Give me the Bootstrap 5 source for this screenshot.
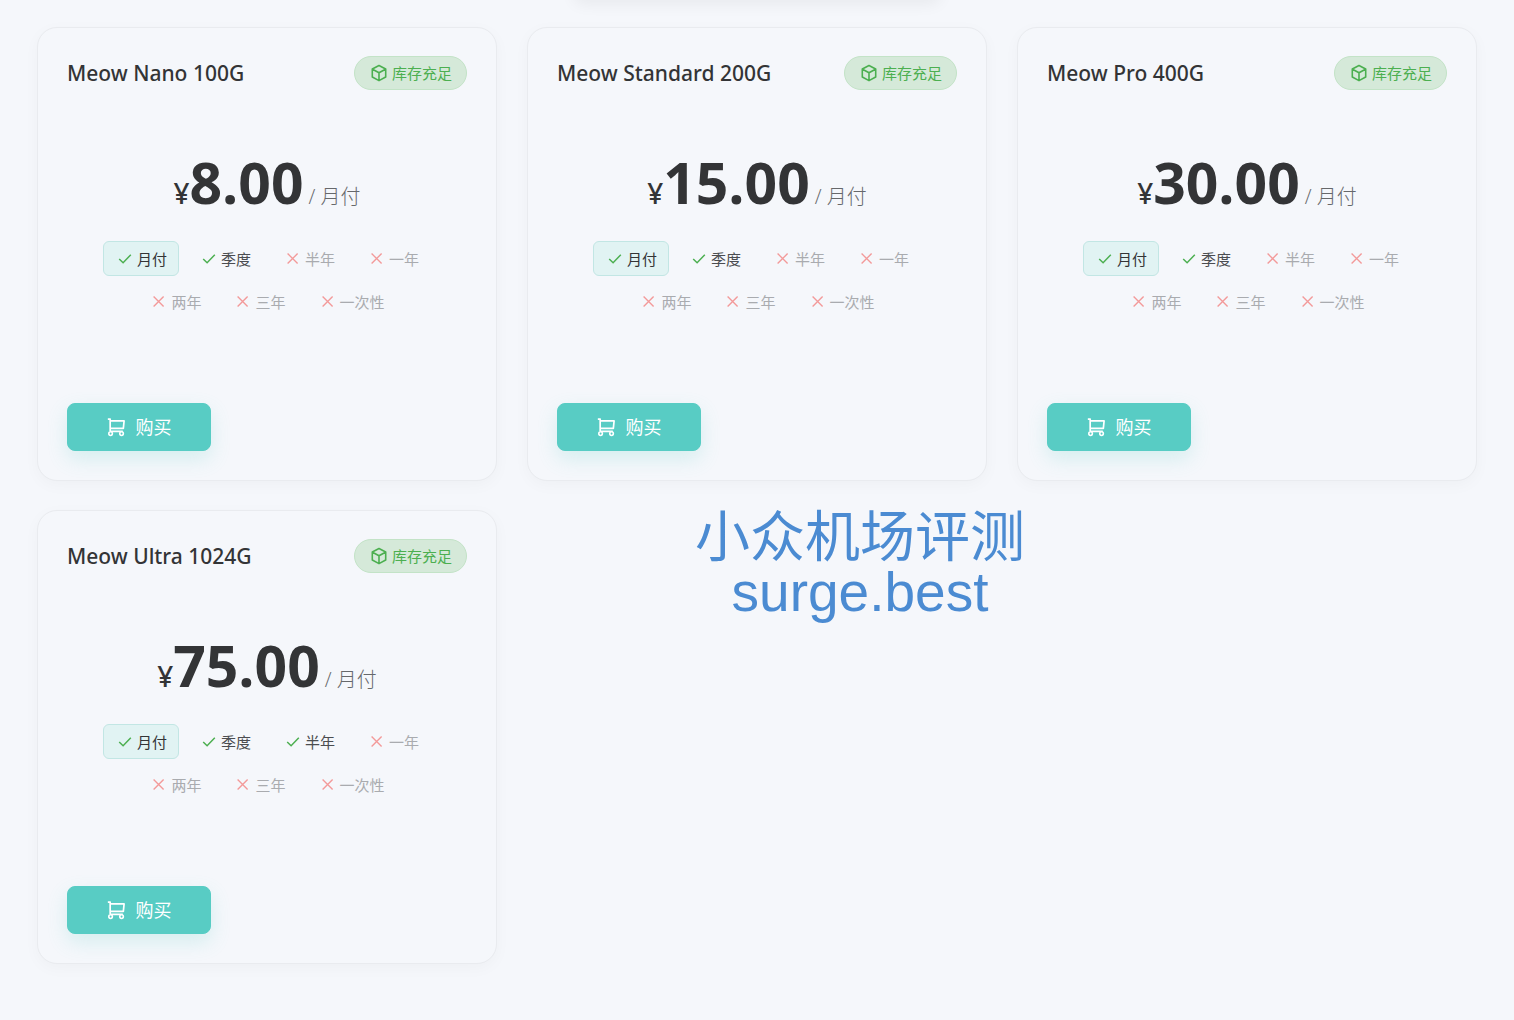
<!DOCTYPE html>
<html lang="zh-CN">
<head>
<meta charset="utf-8">
<meta name="viewport" content="width=device-width, initial-scale=1">
<title>Meow 套餐</title>
<link href="https://cdn.jsdelivr.net/npm/bootstrap@5.3.0/dist/css/bootstrap.min.css" rel="stylesheet">
<style>
body{background:#f5f7fb;color:#333436;font-family:"Open Sans","Noto Sans CJK SC",sans-serif}
svg{fill:none;stroke:currentColor;flex:none}
.top-strip{height:27px;overflow:hidden}
.top-shade{width:368px;height:20px;margin-top:-20px;border-radius:12px;box-shadow:0 4px 16px rgba(0,0,0,.06)}
.plans{padding:0 37px 56px}
.plans>.row{--bs-gutter-x:30px;--bs-gutter-y:29px}
.plan{background:#f5f7fb;border:1px solid #e9ebef;border-radius:20px;padding:28px 29px 29px;box-shadow:0 4px 16px rgba(0,0,0,.03)}
.plan-name{font-family:"Noto Sans","Open Sans",sans-serif;font-size:21px;line-height:34px;font-weight:500}
.stock{height:34px;padding:0 14px 0 15px;border:1px solid #c3e3c7;border-radius:17px;background:#d5e9d9;color:#4caf50;font-size:15px;line-height:20px;gap:4px}
.price{margin-top:50px;height:84px;line-height:84px}
.yen{font-family:"Noto Sans","Open Sans",sans-serif;font-size:28px;font-weight:500}
.amount{font-size:57px;font-weight:700}
.per{font-size:20px;font-weight:300;color:#66686b;margin-left:5px}
.terms{gap:8px;margin-top:17px;margin-bottom:84px}
.term{height:35px;padding:0 11px 0 14px;border:1px solid transparent;border-radius:6px;background:none;color:#4b4d50;font-size:15px;line-height:20px;gap:5px}
.term svg{color:#4caf50}
.term:disabled{color:#a9abaf}
.term:disabled svg{color:#f39a9a}
.term.chosen{background:#e1f3f3;border-color:#c2e6e4;color:#333436}
.buy{--bs-btn-color:#fff;--bs-btn-bg:#58ccc4;--bs-btn-border-color:#58ccc4;--bs-btn-hover-color:#fff;--bs-btn-hover-bg:#49bdb5;width:144px;height:48px;border-radius:8px;font-size:18px;line-height:24px;gap:10px;box-shadow:0 8px 20px rgba(88,204,196,.2)}
.site-mark{padding-left:183px}
.site-mark p{font:55px/55px "Liberation Sans","Noto Sans CJK SC",sans-serif;color:#4b8bd2}
</style>
<script src="https://cdn.jsdelivr.net/npm/bootstrap@5.3.0/dist/js/bootstrap.bundle.min.js"></script>
</head>
<body>
<svg class="d-none">
<symbol id="box" viewBox="0 0 18 18"><path d="M9 1.5 15.7 5v8L9 16.6 2.3 13V5zM2.5 5.2 9 8.8l6.5-3.6M9 8.8v7.6" stroke-width="1.6" stroke-linejoin="round"/></symbol>
<symbol id="yes" viewBox="0 0 14 14"><path d="m1.2 7 3.9 3.8 7.7-8" stroke-width="1.5"/></symbol>
<symbol id="no" viewBox="0 0 14 14"><path d="m1.6 1.6 10 10M11.6 1.6l-10 10" stroke-width="1.4"/></symbol>
<symbol id="cart" viewBox="0 0 18 18"><path d="M.8 1H3v11.4M3 2.8h13.2l-.7 7H3M3 12.6h12" stroke-width="1.6" stroke-linejoin="round"/><circle cx="3.4" cy="14.8" r="1.7" stroke-width="1.5" fill="#58ccc4"/><circle cx="13.8" cy="14.8" r="1.7" stroke-width="1.5" fill="#58ccc4"/></symbol>
</svg>
<header class="top-strip"><div class="top-shade mx-auto"></div></header>
<main class="plans">
<div class="row">
<div class="col-4"><article class="plan">
<div class="d-flex justify-content-between align-items-center"><h2 class="plan-name m-0">Meow Nano 100G</h2><span class="stock d-inline-flex align-items-center"><svg width="18" height="18"><use href="#box"/></svg>库存充足</span></div>
<div class="price d-flex justify-content-center align-items-baseline"><span class="yen">¥</span><span class="amount">8.00</span><span class="per">/ 月付</span></div>
<div class="terms d-flex flex-wrap justify-content-center">
<button class="term chosen d-flex align-items-center"><svg width="14" height="14"><use href="#yes"/></svg>月付</button>
<button class="term d-flex align-items-center"><svg width="14" height="14"><use href="#yes"/></svg>季度</button>
<button class="term d-flex align-items-center" disabled><svg width="14" height="14"><use href="#no"/></svg>半年</button>
<button class="term d-flex align-items-center" disabled><svg width="14" height="14"><use href="#no"/></svg>一年</button>
<button class="term d-flex align-items-center" disabled><svg width="14" height="14"><use href="#no"/></svg>两年</button>
<button class="term d-flex align-items-center" disabled><svg width="14" height="14"><use href="#no"/></svg>三年</button>
<button class="term d-flex align-items-center" disabled><svg width="14" height="14"><use href="#no"/></svg>一次性</button>
</div>
<button class="btn buy d-flex align-items-center justify-content-center"><svg width="19" height="19"><use href="#cart"/></svg>购买</button>
</article></div>
<div class="col-4"><article class="plan">
<div class="d-flex justify-content-between align-items-center"><h2 class="plan-name m-0">Meow Standard 200G</h2><span class="stock d-inline-flex align-items-center"><svg width="18" height="18"><use href="#box"/></svg>库存充足</span></div>
<div class="price d-flex justify-content-center align-items-baseline"><span class="yen">¥</span><span class="amount">15.00</span><span class="per">/ 月付</span></div>
<div class="terms d-flex flex-wrap justify-content-center">
<button class="term chosen d-flex align-items-center"><svg width="14" height="14"><use href="#yes"/></svg>月付</button>
<button class="term d-flex align-items-center"><svg width="14" height="14"><use href="#yes"/></svg>季度</button>
<button class="term d-flex align-items-center" disabled><svg width="14" height="14"><use href="#no"/></svg>半年</button>
<button class="term d-flex align-items-center" disabled><svg width="14" height="14"><use href="#no"/></svg>一年</button>
<button class="term d-flex align-items-center" disabled><svg width="14" height="14"><use href="#no"/></svg>两年</button>
<button class="term d-flex align-items-center" disabled><svg width="14" height="14"><use href="#no"/></svg>三年</button>
<button class="term d-flex align-items-center" disabled><svg width="14" height="14"><use href="#no"/></svg>一次性</button>
</div>
<button class="btn buy d-flex align-items-center justify-content-center"><svg width="19" height="19"><use href="#cart"/></svg>购买</button>
</article></div>
<div class="col-4"><article class="plan">
<div class="d-flex justify-content-between align-items-center"><h2 class="plan-name m-0">Meow Pro 400G</h2><span class="stock d-inline-flex align-items-center"><svg width="18" height="18"><use href="#box"/></svg>库存充足</span></div>
<div class="price d-flex justify-content-center align-items-baseline"><span class="yen">¥</span><span class="amount">30.00</span><span class="per">/ 月付</span></div>
<div class="terms d-flex flex-wrap justify-content-center">
<button class="term chosen d-flex align-items-center"><svg width="14" height="14"><use href="#yes"/></svg>月付</button>
<button class="term d-flex align-items-center"><svg width="14" height="14"><use href="#yes"/></svg>季度</button>
<button class="term d-flex align-items-center" disabled><svg width="14" height="14"><use href="#no"/></svg>半年</button>
<button class="term d-flex align-items-center" disabled><svg width="14" height="14"><use href="#no"/></svg>一年</button>
<button class="term d-flex align-items-center" disabled><svg width="14" height="14"><use href="#no"/></svg>两年</button>
<button class="term d-flex align-items-center" disabled><svg width="14" height="14"><use href="#no"/></svg>三年</button>
<button class="term d-flex align-items-center" disabled><svg width="14" height="14"><use href="#no"/></svg>一次性</button>
</div>
<button class="btn buy d-flex align-items-center justify-content-center"><svg width="19" height="19"><use href="#cart"/></svg>购买</button>
</article></div>
<div class="col-4"><article class="plan">
<div class="d-flex justify-content-between align-items-center"><h2 class="plan-name m-0">Meow Ultra 1024G</h2><span class="stock d-inline-flex align-items-center"><svg width="18" height="18"><use href="#box"/></svg>库存充足</span></div>
<div class="price d-flex justify-content-center align-items-baseline"><span class="yen">¥</span><span class="amount">75.00</span><span class="per">/ 月付</span></div>
<div class="terms d-flex flex-wrap justify-content-center">
<button class="term chosen d-flex align-items-center"><svg width="14" height="14"><use href="#yes"/></svg>月付</button>
<button class="term d-flex align-items-center"><svg width="14" height="14"><use href="#yes"/></svg>季度</button>
<button class="term d-flex align-items-center"><svg width="14" height="14"><use href="#yes"/></svg>半年</button>
<button class="term d-flex align-items-center" disabled><svg width="14" height="14"><use href="#no"/></svg>一年</button>
<button class="term d-flex align-items-center" disabled><svg width="14" height="14"><use href="#no"/></svg>两年</button>
<button class="term d-flex align-items-center" disabled><svg width="14" height="14"><use href="#no"/></svg>三年</button>
<button class="term d-flex align-items-center" disabled><svg width="14" height="14"><use href="#no"/></svg>一次性</button>
</div>
<button class="btn buy d-flex align-items-center justify-content-center"><svg width="19" height="19"><use href="#cart"/></svg>购买</button>
</article></div>
<div class="col-8 site-mark"><p class="d-inline-block text-center m-0">小众机场评测<br>surge.best</p></div>
</div>
</main>
</body>
</html>
